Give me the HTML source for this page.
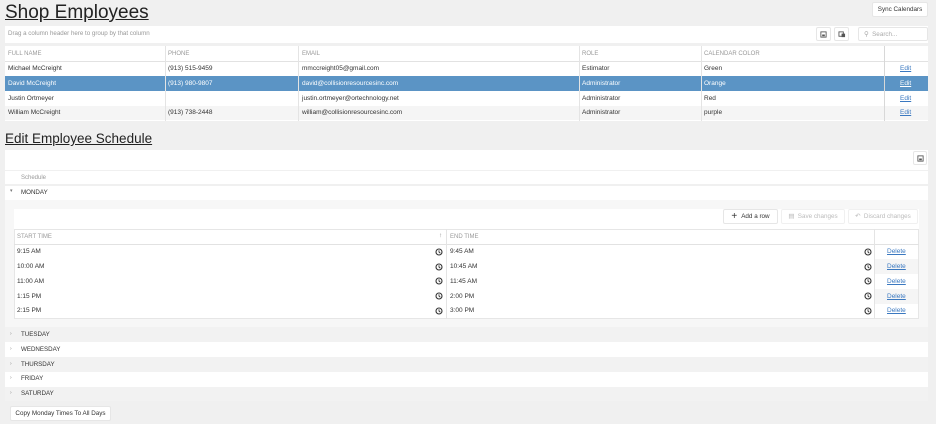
<!DOCTYPE html>
<html><head><meta charset="utf-8"><style>
*{margin:0;padding:0;box-sizing:border-box}
body{width:936px;height:424px;background:#f0f0f0;font-family:"Liberation Sans",sans-serif;font-size:6.5px;color:#333;position:relative;overflow:hidden}
.a{position:absolute}
.t{position:absolute;white-space:nowrap;line-height:1}
.h{color:#999;font-size:6px}
.lnk{color:#3a78c0;text-decoration:underline}
.vl{position:absolute;width:1px;background:#e4e4e4}
.btn{position:absolute;background:#fff;border:1px solid #e6e6e6;border-radius:2px;font-size:6.3px;display:flex;align-items:center;justify-content:center;white-space:nowrap}
</style></head><body>
<div class="t" style="left:5px;top:3px;font-size:19px;color:#222;text-decoration:underline">Shop Employees</div>
<div class="btn" style="left:872px;top:2px;width:56px;height:15px">Sync Calendars</div>

<div class="a" style="left:5px;top:26px;width:923px;height:17px;background:#fff"></div>
<div class="t" style="left:8px;top:31px;color:#999;font-size:6.2px">Drag a column header here to group by that column</div>
<div class="btn" style="left:816px;top:27px;width:15px;height:14px"><svg width="7" height="7" viewBox="0 0 8 8"><rect x="1" y="1" width="6" height="6" fill="none" stroke="#555"/><rect x="2.5" y="4" width="3" height="2" fill="#555"/></svg></div>
<div class="btn" style="left:834px;top:27px;width:15px;height:14px"><svg width="8" height="7" viewBox="0 0 9 8"><rect x="1" y="1" width="5" height="5" fill="none" stroke="#555"/><rect x="4" y="3" width="4" height="4" fill="#555"/></svg></div>
<div class="btn" style="left:858px;top:27px;width:70px;height:14px;justify-content:flex-start;padding-left:5px;color:#aaa">⚲&nbsp; Search...</div>

<div class="a" style="left:5px;top:46px;width:923px;height:75px;background:#fff"></div>
<div class="a" style="left:5px;top:61px;width:923px;height:1px;background:#e2e2e2"></div>
<div class="a" style="left:5px;top:76px;width:923px;height:15px;background:#5b94c5"></div>
<div class="a" style="left:5px;top:106px;width:923px;height:14px;background:#f5f5f5"></div>
<div class="vl" style="left:165px;top:46px;height:75px"></div>
<div class="vl" style="left:298px;top:46px;height:75px"></div>
<div class="vl" style="left:579px;top:46px;height:75px"></div>
<div class="vl" style="left:701px;top:46px;height:75px"></div>
<div class="vl" style="left:884px;top:46px;height:75px;background:#d8d8d8"></div>
<div class="t h" style="left:8px;top:51px">FULL NAME</div>
<div class="t h" style="left:168px;top:51px">PHONE</div>
<div class="t h" style="left:302px;top:51px">EMAIL</div>
<div class="t h" style="left:582px;top:51px">ROLE</div>
<div class="t h" style="left:704px;top:51px">CALENDAR COLOR</div>

<div class="t" style="left:8px;top:66px">Michael McCreight</div><div class="t" style="left:168px;top:66px">(913) 515-9459</div><div class="t" style="left:302px;top:66px">mmccreight05@gmail.com</div><div class="t" style="left:582px;top:66px">Estimator</div><div class="t" style="left:704px;top:66px">Green</div><div class="t lnk" style="left:900px;top:66px">Edit</div>
<div class="t" style="left:8px;top:81px;color:#fff">David McCreight</div><div class="t" style="left:168px;top:81px;color:#fff">(913) 980-9807</div><div class="t" style="left:302px;top:81px;color:#fff">david@collisionresourcesinc.com</div><div class="t" style="left:582px;top:81px;color:#fff">Administrator</div><div class="t" style="left:704px;top:81px;color:#fff">Orange</div><div class="t" style="left:900px;top:81px;color:#fff;text-decoration:underline">Edit</div>
<div class="t" style="left:8px;top:96px">Justin Ortmeyer</div><div class="t" style="left:302px;top:96px">justin.ortmeyer@ortechnology.net</div><div class="t" style="left:582px;top:96px">Administrator</div><div class="t" style="left:704px;top:96px">Red</div><div class="t lnk" style="left:900px;top:96px">Edit</div>
<div class="t" style="left:8px;top:110px">William McCreight</div><div class="t" style="left:168px;top:110px">(913) 738-2448</div><div class="t" style="left:302px;top:110px">william@collisionresourcesinc.com</div><div class="t" style="left:582px;top:110px">Administrator</div><div class="t" style="left:704px;top:110px">purple</div><div class="t lnk" style="left:900px;top:110px">Edit</div>

<div class="t" style="left:5px;top:132px;font-size:13.5px;color:#222;text-decoration:underline">Edit Employee Schedule</div>
<div class="a" style="left:5px;top:150px;width:923px;height:20px;background:#fff"></div>
<div class="btn" style="left:913px;top:151px;width:14px;height:14px"><svg width="7" height="7" viewBox="0 0 8 8"><rect x="1" y="1" width="6" height="6" fill="none" stroke="#555"/><rect x="2.5" y="4" width="3" height="2" fill="#555"/></svg></div>
<div class="a" style="left:5px;top:171px;width:923px;height:13px;background:#fff"></div>
<div class="t h" style="left:21px;top:175px">Schedule</div>
<div class="a" style="left:5px;top:186px;width:923px;height:14px;background:#fff"></div>
<div class="t" style="left:10px;top:189px;font-size:5px;color:#777">▾</div>
<div class="t" style="left:21px;top:190px;font-size:6.2px">MONDAY</div>
<div class="a" style="left:5px;top:200px;width:923px;height:127px;background:#f7f7f7"></div>
<div class="a" style="left:14px;top:209px;width:905px;height:20px;background:#fff"></div>
<div class="btn" style="left:723px;top:209px;width:55px;height:15px"><b style="font-size:10px;font-weight:normal;margin-right:4px">+</b>Add a row</div>
<div class="btn" style="left:781px;top:209px;width:64px;height:15px;color:#bbb;border-color:#f0f0f0">▤&nbsp; Save changes</div>
<div class="btn" style="left:848px;top:209px;width:70px;height:15px;color:#bbb;border-color:#f0f0f0">↶&nbsp; Discard changes</div>
<div class="a" style="left:14px;top:229px;width:905px;height:90px;background:#fff;border:1px solid #e6e6e6"></div>
<div class="a" style="left:14px;top:244px;width:905px;height:1px;background:#e2e2e2"></div>
<div class="vl" style="left:446px;top:229px;height:90px"></div>
<div class="vl" style="left:874px;top:229px;height:90px"></div>
<div class="t h" style="left:17px;top:234px">START TIME</div>
<div class="t" style="left:439px;top:233px;color:#888">↑</div>
<div class="t h" style="left:450px;top:234px">END TIME</div>
<div class="a" style="left:875px;top:259px;width:43px;height:15px;background:#f5f5f5"></div>
<div class="a" style="left:875px;top:289px;width:43px;height:15px;background:#f5f5f5"></div>

<div class="t" style="left:17px;top:249px">9:15 AM</div><div class="t" style="left:450px;top:249px">9:45 AM</div><div class="t lnk" style="left:887px;top:249px">Delete</div>
<div class="t" style="left:17px;top:264px">10:00 AM</div><div class="t" style="left:450px;top:264px">10:45 AM</div><div class="t lnk" style="left:887px;top:264px">Delete</div>
<div class="t" style="left:17px;top:279px">11:00 AM</div><div class="t" style="left:450px;top:279px">11:45 AM</div><div class="t lnk" style="left:887px;top:279px">Delete</div>
<div class="t" style="left:17px;top:294px">1:15 PM</div><div class="t" style="left:450px;top:294px">2:00 PM</div><div class="t lnk" style="left:887px;top:294px">Delete</div>
<div class="t" style="left:17px;top:308px">2:15 PM</div><div class="t" style="left:450px;top:308px">3:00 PM</div><div class="t lnk" style="left:887px;top:308px">Delete</div>
<svg class="a" style="left:0;top:0" width="936" height="424">
<defs><g id="c"><circle cx="0" cy="0" r="3" fill="none" stroke="#333" stroke-width="1.1"/><path d="M0-1.8V0L1.3 1.2" fill="none" stroke="#333" stroke-width="0.9"/></g></defs>
<use href="#c" x="439" y="252"/><use href="#c" x="439" y="267"/><use href="#c" x="439" y="281"/><use href="#c" x="439" y="296"/><use href="#c" x="439" y="311"/>
<use href="#c" x="868" y="252"/><use href="#c" x="868" y="267"/><use href="#c" x="868" y="281"/><use href="#c" x="868" y="296"/><use href="#c" x="868" y="311"/>
</svg>

<div class="a" style="left:5px;top:327px;width:923px;height:15px;background:#f2f2f2"></div>
<div class="a" style="left:5px;top:342px;width:923px;height:15px;background:#fff"></div>
<div class="a" style="left:5px;top:357px;width:923px;height:15px;background:#f2f2f2"></div>
<div class="a" style="left:5px;top:372px;width:923px;height:15px;background:#fff"></div>
<div class="a" style="left:5px;top:387px;width:923px;height:14px;background:#f2f2f2"></div>
<div class="t" style="left:10px;top:332px;font-size:5px;color:#888">›</div><div class="t" style="left:21px;top:332px;font-size:6.2px">TUESDAY</div>
<div class="t" style="left:10px;top:347px;font-size:5px;color:#888">›</div><div class="t" style="left:21px;top:347px;font-size:6.2px">WEDNESDAY</div>
<div class="t" style="left:10px;top:362px;font-size:5px;color:#888">›</div><div class="t" style="left:21px;top:362px;font-size:6.2px">THURSDAY</div>
<div class="t" style="left:10px;top:376px;font-size:5px;color:#888">›</div><div class="t" style="left:21px;top:376px;font-size:6.2px">FRIDAY</div>
<div class="t" style="left:10px;top:391px;font-size:5px;color:#888">›</div><div class="t" style="left:21px;top:391px;font-size:6.2px">SATURDAY</div>
<div class="btn" style="left:10px;top:406px;width:101px;height:15px">Copy Monday Times To All Days</div>
</body></html>
